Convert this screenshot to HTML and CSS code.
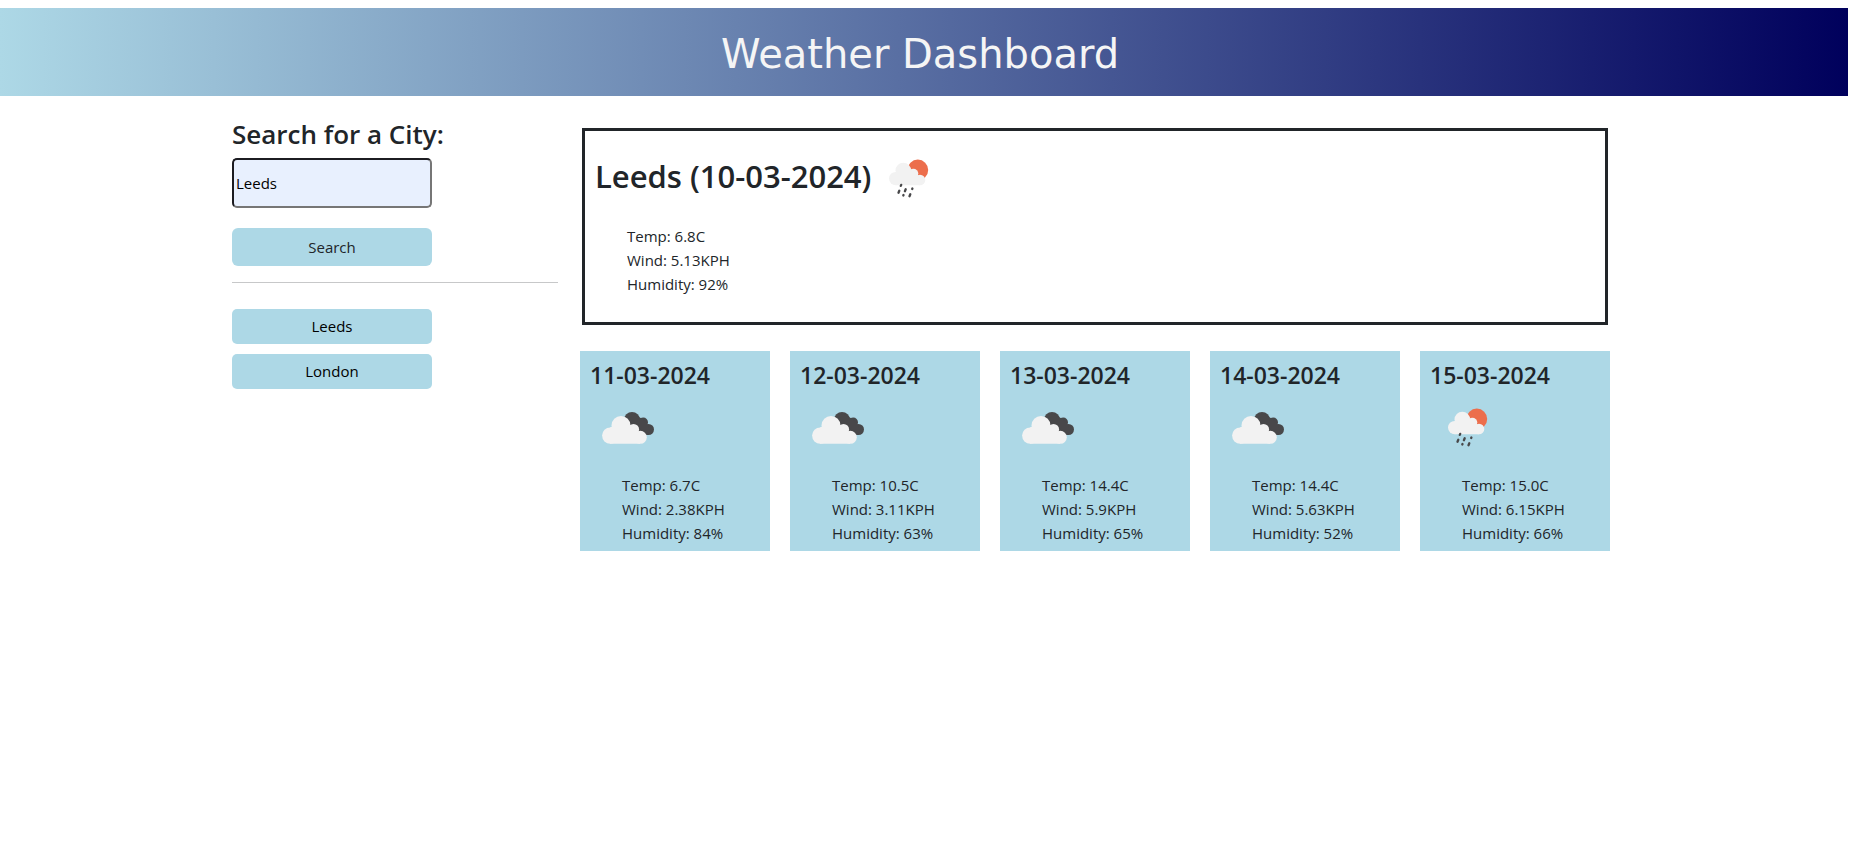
FILE: index.html
```html
<!DOCTYPE html>
<html lang="en">
<head>
<meta charset="utf-8">
<title>Weather Dashboard</title>
<link rel="stylesheet" href="styles.css">
</head>
<body>
<svg class="sprite" aria-hidden="true">
  <symbol id="clouds" viewBox="0 0 75 75">
    <g fill="#48484a">
      <circle cx="42" cy="30" r="8"/><circle cx="53.3" cy="32.3" r="4.7"/><circle cx="58.5" cy="39.5" r="5.5"/>
      <path d="M42 24L53 29L59 36L58 45L50 44L38 36Z"/>
    </g>
    <g fill="#f2f2f2">
      <circle cx="20.3" cy="45.6" r="8.2"/><circle cx="31" cy="35.5" r="9.5"/><circle cx="43.5" cy="39.5" r="5.6"/><circle cx="50.3" cy="47.3" r="6.5"/>
      <path d="M20 37.5L31 33L44 36L50 44V53.8H20Z"/>
    </g>
  </symbol>
  <symbol id="rain" viewBox="0 0 75 75">
    <circle cx="46.8" cy="29" r="10.4" fill="#ec6e4c"/>
    <g fill="#f2f2f2">
      <circle cx="24.7" cy="37.6" r="6.7"/><circle cx="32.3" cy="29.5" r="7.8"/><circle cx="42.4" cy="32.6" r="4.9"/><circle cx="49" cy="39" r="5.3"/>
      <path d="M24.700 31L32 28L43 30L49 36V44.300H24.700Z"/>
    </g>
    <path d="M30.200 43.900L29.800 44.900M28.300 49.700L27.500 51.700M34.700 48.300L33.900 50.300M32.500 54L32.300 54.500M41.400 47.500L41.200 48M39.300 53.300L38.500 55.300" stroke="#48484a" stroke-width="2.300" stroke-linecap="round" fill="none"/>
  </symbol>
</svg>

<header class="banner"><h1 class="banner-title">Weather Dashboard</h1></header>

<div class="layout">
  <aside class="sidebar">
    <form class="search">
      <label class="search-label" for="city">Search for a City:</label>
      <input class="search-input" id="city" type="text" value="Leeds">
      <button class="search-button" type="button">Search</button>
    </form>
    <hr class="divider">
    <div class="history">
      <button class="history-button" type="button">Leeds</button>
      <button class="history-button" type="button">London</button>
    </div>
  </aside>

  <main class="main">
    <section class="today">
      <div class="today-head">
        <h2 class="today-title">Leeds (10-03-2024)</h2>
        <svg class="icon" role="img" aria-label="Rain"><use href="#rain"/></svg>
      </div>
      <ul class="stats"><li>Temp: 6.8C</li><li>Wind: 5.13KPH</li><li>Humidity: 92%</li></ul>
    </section>

    <section class="forecast">
      <article class="card">
        <h3 class="card-title">11-03-2024</h3>
        <svg class="icon" role="img" aria-label="Clouds"><use href="#clouds"/></svg>
        <ul class="stats"><li>Temp: 6.7C</li><li>Wind: 2.38KPH</li><li>Humidity: 84%</li></ul>
      </article>
      <article class="card">
        <h3 class="card-title">12-03-2024</h3>
        <svg class="icon" role="img" aria-label="Clouds"><use href="#clouds"/></svg>
        <ul class="stats"><li>Temp: 10.5C</li><li>Wind: 3.11KPH</li><li>Humidity: 63%</li></ul>
      </article>
      <article class="card">
        <h3 class="card-title">13-03-2024</h3>
        <svg class="icon" role="img" aria-label="Clouds"><use href="#clouds"/></svg>
        <ul class="stats"><li>Temp: 14.4C</li><li>Wind: 5.9KPH</li><li>Humidity: 65%</li></ul>
      </article>
      <article class="card">
        <h3 class="card-title">14-03-2024</h3>
        <svg class="icon" role="img" aria-label="Clouds"><use href="#clouds"/></svg>
        <ul class="stats"><li>Temp: 14.4C</li><li>Wind: 5.63KPH</li><li>Humidity: 52%</li></ul>
      </article>
      <article class="card">
        <h3 class="card-title">15-03-2024</h3>
        <svg class="icon" role="img" aria-label="Rain"><use href="#rain"/></svg>
        <ul class="stats"><li>Temp: 15.0C</li><li>Wind: 6.15KPH</li><li>Humidity: 66%</li></ul>
      </article>
    </section>
  </main>
</div>
</body>
</html>
```
FILE: styles.css
```css
* { box-sizing: border-box; }

body {
  margin: 8px 7px 0 0;
  background: #fff;
  color: #212529;
  font-family: "Segoe UI", "Open Sans", "Noto Sans", sans-serif;
  font-size: 15px;
  line-height: 24px;
}

h1, h2, h3, ul { margin: 0; padding: 0; font-weight: 600; }

.sprite { display: none; }

.banner {
  padding: 22px 28px 18px 20px;
  background: linear-gradient(to right, lightblue, #00005c);
  text-align: center;
}

.banner-title {
  color: #f5f5f5;
  font: 400 40px/48px Verdana, "DejaVu Sans", sans-serif;
}

.layout {
  display: grid;
  grid-template-columns: 326fr 1030fr;
  gap: 22px;
  padding: 20px 238px 0 232px;
}

.search { display: flex; flex-direction: column; align-items: flex-start; }

.search-label { margin-bottom: 6px; font-size: 26px; font-weight: 600; line-height: 36px; }

.search-input {
  width: 200px;
  height: 50px;
  margin-bottom: 20px;
  padding: 1px 2px;
  border: 2px solid;
  border-color: #1c1c21 #767676 #767676 #1c1c21;
  border-radius: 5px;
  background: #e8f0fe;
  color: #000;
  font: inherit;
}

.search-button, .history-button {
  width: 200px;
  border: 0;
  border-radius: 5px;
  background: lightblue;
  color: #000;
  font: inherit;
}

.search-button { height: 38px; border-radius: 6px; color: #212529; }

.divider { margin: 16px 0 26px; border: 0; border-top: 1px solid #c7c8c9; }

.history { display: flex; flex-direction: column; gap: 10px; }

.history-button { height: 35px; padding: 0 6px 2px; }

.today {
  margin: 12px 2px 26px;
  padding: 10px 10px 26px;
  border: 3px solid #212529;
}

.today-head { display: flex; align-items: center; margin-bottom: 8px; }

.today-title { padding-bottom: 6px; font-size: 31px; line-height: 38px; }

.icon { display: block; flex: none; width: 75px; height: 75px; }

.stats { padding-left: 32px; font-weight: 400; list-style: none; }

.forecast { display: grid; grid-template-columns: repeat(5, 1fr); gap: 20px; }

.card { padding: 10px 10px 6px; background: lightblue; }

.card-title { font-size: 23px; line-height: 29px; }

.card .icon { margin-bottom: 8px; }
```
